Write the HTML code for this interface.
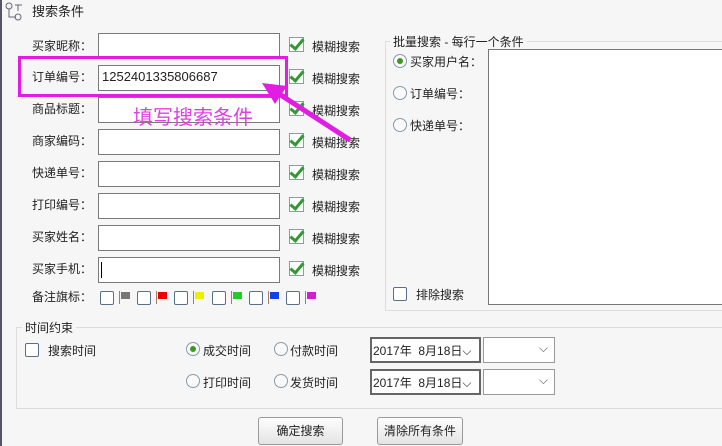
<!DOCTYPE html>
<html><head><meta charset="utf-8"><style>
*{margin:0;padding:0;box-sizing:border-box}
body{width:722px;height:446px;overflow:hidden;background:#f6f6f6;font-family:"Liberation Sans","Noto Sans CJK SC",sans-serif;font-size:12px;color:#222;position:relative}
.a{position:absolute;white-space:nowrap}
.inp{position:absolute;background:#fff;border:1px solid #7a7a7a;height:26px;left:98px;width:182px}
.lab{position:absolute;left:32px;width:64px;line-height:14px}
.cb{position:absolute;width:14px;height:14px;border:1px solid #5a6f8c;background:#fff;border-radius:2px}
.chk{position:absolute;left:289px;width:15px;height:15px;border:1px solid #8a9aa8;background:#fff}
.chk:after{content:"";position:absolute;left:3px;top:-2px;width:5px;height:11px;border:solid #2f9a2f;border-width:0 3px 3px 0;transform:rotate(40deg)}
.rd{position:absolute;width:14px;height:14px;border-radius:50%;border:1px solid #8a9aaa;background:#fafafa}
.rd.on:after{content:"";position:absolute;left:3px;top:3px;width:6px;height:6px;border-radius:50%;background:#3a9a20}
.fl{position:absolute;top:291px;width:12px;height:13px}
.fl i{position:absolute;left:0;top:0;width:1px;height:13px;background:#a08060}
.fl b{position:absolute;left:2px;top:1px;width:9px;height:7px}
.sel{position:absolute;background:#fff;border:1px solid #999;height:26px}
.btn{position:absolute;border:1px solid #9a9a9a;border-radius:3px;background:linear-gradient(#fdfdfd,#e4e4e4);text-align:center;line-height:26px;height:28px}
</style></head><body>
<div class="a" style="left:0;top:0;width:2px;height:446px;background:#556"></div>
<svg class="a" style="left:4px;top:2px" width="20" height="20" viewBox="0 0 20 20"><circle cx="5" cy="4" r="3" fill="none" stroke="#667" /><path d="M5 7v8h7M11 3h7M14 3v6" stroke="#667" fill="none"/><circle cx="14" cy="15" r="3" fill="none" stroke="#667"/></svg>
<div class="a" style="left:32px;top:1px;font-size:13px">搜索条件</div>

<div class="lab" style="top:39px">买家昵称：</div>
<div class="lab" style="top:70px">订单编号：</div>
<div class="lab" style="top:102px">商品标题：</div>
<div class="lab" style="top:134px">商家编码：</div>
<div class="lab" style="top:166px">快递单号：</div>
<div class="lab" style="top:198px">打印编号：</div>
<div class="lab" style="top:230px">买家姓名：</div>
<div class="lab" style="top:262px">买家手机：</div>
<div class="lab" style="top:290px">备注旗标：</div>

<div class="inp" style="top:33px"></div>
<div class="inp" style="top:65px;padding:3px 3px;font-size:13px">1252401335806687</div>
<div class="inp" style="top:97px"></div>
<div class="inp" style="top:129px"></div>
<div class="inp" style="top:161px"></div>
<div class="inp" style="top:193px"></div>
<div class="inp" style="top:225px"></div>
<div class="inp" style="top:257px"><div class="a" style="left:2px;top:4px;width:1px;height:16px;background:#000"></div></div>

<div class="chk" style="top:37px"></div><div class="a" style="left:312px;top:38px">模糊搜索</div>
<div class="chk" style="top:69px"></div><div class="a" style="left:312px;top:70px">模糊搜索</div>
<div class="chk" style="top:101px"></div><div class="a" style="left:312px;top:102px">模糊搜索</div>
<div class="chk" style="top:133px"></div><div class="a" style="left:312px;top:134px">模糊搜索</div>
<div class="chk" style="top:165px"></div><div class="a" style="left:312px;top:166px">模糊搜索</div>
<div class="chk" style="top:197px"></div><div class="a" style="left:312px;top:198px">模糊搜索</div>
<div class="chk" style="top:229px"></div><div class="a" style="left:312px;top:230px">模糊搜索</div>
<div class="chk" style="top:261px"></div><div class="a" style="left:312px;top:262px">模糊搜索</div>

<div class="cb" style="left:100px;top:291px"></div><div class="fl" style="left:119px"><i></i><b style="background:#777"></b></div>
<div class="cb" style="left:137px;top:291px"></div><div class="fl" style="left:156px"><i></i><b style="background:#e00"></b></div>
<div class="cb" style="left:174px;top:291px"></div><div class="fl" style="left:193px"><i></i><b style="background:#ee0"></b></div>
<div class="cb" style="left:212px;top:291px"></div><div class="fl" style="left:231px"><i></i><b style="background:#2c2"></b></div>
<div class="cb" style="left:249px;top:291px"></div><div class="fl" style="left:268px"><i></i><b style="background:#14d"></b></div>
<div class="cb" style="left:286px;top:291px"></div><div class="fl" style="left:305px"><i></i><b style="background:#c2c"></b></div>

<div class="a" style="left:18px;top:56px;width:270px;height:41px;border:3px solid #e21de2"></div>
<div class="a" style="left:133px;top:101px;font-size:20px;color:#e040e0">填写搜索条件</div>
<svg class="a" style="left:255px;top:78px" width="110" height="70"><line x1="95" y1="62" x2="18" y2="12" stroke="#e21de2" stroke-width="5"/><polygon points="7,5 32,8 20,26" fill="#e21de2"/></svg>

<div class="a" style="left:385px;top:41px;width:340px;height:270px;border:1px solid #ddd"></div>
<div class="a" style="left:390px;top:33px;background:#f6f6f6;padding:0 3px">批量搜索 - 每行一个条件</div>
<div class="a" style="left:488px;top:49px;width:240px;height:256px;background:#fff;border:1px solid #777"></div>
<div class="rd on" style="left:393px;top:54px"></div><div class="a" style="left:410px;top:53px">买家用户名：</div>
<div class="rd" style="left:393px;top:86px"></div><div class="a" style="left:410px;top:85px">订单编号：</div>
<div class="rd" style="left:393px;top:118px"></div><div class="a" style="left:410px;top:117px">快递单号：</div>
<div class="cb" style="left:393px;top:287px"></div><div class="a" style="left:416px;top:286px">排除搜索</div>

<div class="a" style="left:16px;top:327px;width:710px;height:82px;border:1px solid #ddd"></div>
<div class="a" style="left:22px;top:319px;background:#f6f6f6;padding:0 3px">时间约束</div>
<div class="cb" style="left:25px;top:343px"></div><div class="a" style="left:48px;top:342px">搜索时间</div>
<div class="rd on" style="left:186px;top:342px"></div><div class="a" style="left:203px;top:342px">成交时间</div>
<div class="rd" style="left:274px;top:342px"></div><div class="a" style="left:290px;top:342px">付款时间</div>
<div class="rd" style="left:186px;top:374px"></div><div class="a" style="left:203px;top:374px">打印时间</div>
<div class="rd" style="left:274px;top:374px"></div><div class="a" style="left:290px;top:374px">发货时间</div>
<div class="sel" style="left:370px;top:337px;width:111px;border:2px solid #666;padding:3px 1px">2017年&nbsp; 8月18日⌵</div>
<div class="sel" style="left:483px;top:337px;width:72px;text-align:right;padding:3px 6px;color:#555">⌵</div>
<div class="sel" style="left:370px;top:369px;width:111px;border:2px solid #666;padding:3px 1px">2017年&nbsp; 8月18日⌵</div>
<div class="sel" style="left:483px;top:369px;width:72px;text-align:right;padding:3px 6px;color:#555">⌵</div>

<div class="btn" style="left:258px;top:417px;width:85px">确定搜索</div>
<div class="btn" style="left:377px;top:417px;width:86px">清除所有条件</div>
</body></html>
